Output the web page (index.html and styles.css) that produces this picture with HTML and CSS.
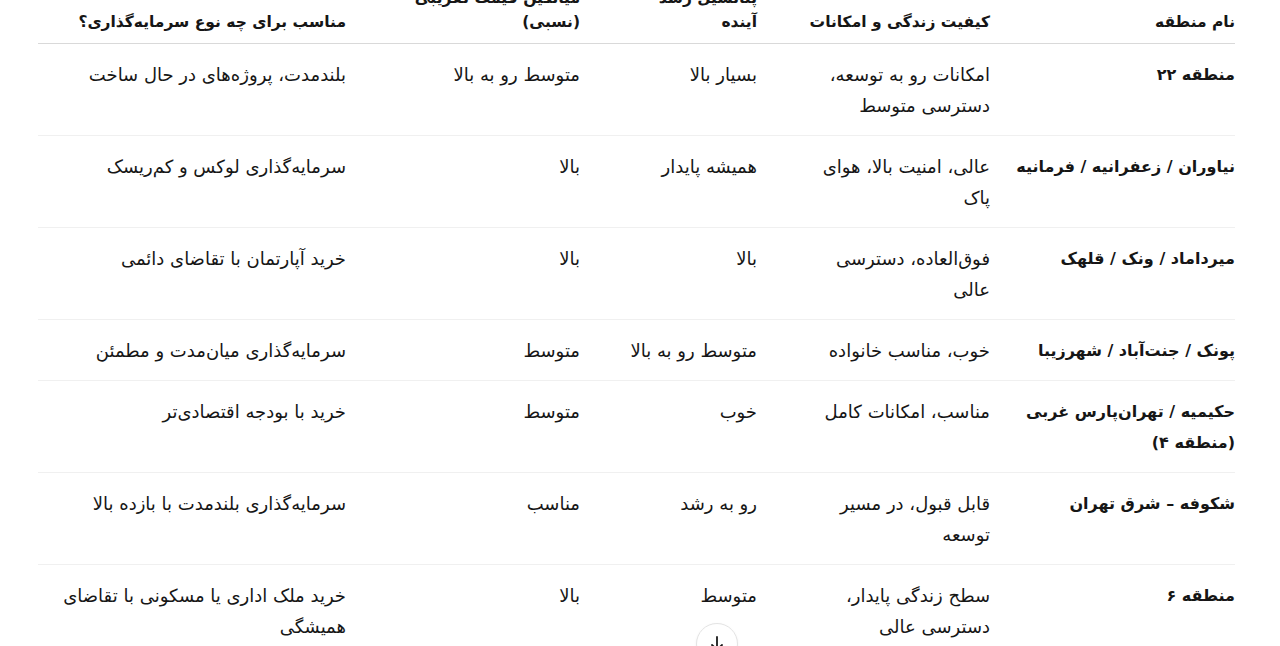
FILE: index.html
```html
<!DOCTYPE html>
<html lang="fa" dir="rtl">
<head>
<meta charset="utf-8">
<title>مقایسه مناطق</title>
<link rel="stylesheet" href="styles.css">
</head>
<body>
<main class="page">
  <table class="compare">
    <colgroup>
      <col class="c1"><col class="c2"><col class="c3"><col class="c4"><col class="c5">
    </colgroup>
    <thead>
      <tr>
        <th>نام منطقه</th>
        <th>کیفیت زندگی و امکانات</th>
        <th>پتانسیل رشد آینده</th>
        <th>میانگین قیمت تقریبی (نسبی)</th>
        <th>مناسب برای چه نوع سرمایه‌گذاری؟</th>
      </tr>
    </thead>
    <tbody>
      <tr>
        <td>منطقه ۲۲</td>
        <td>امکانات رو به توسعه، دسترسی متوسط</td>
        <td>بسیار بالا</td>
        <td>متوسط رو به بالا</td>
        <td>بلندمدت، پروژه‌های در حال ساخت</td>
      </tr>
      <tr>
        <td>نیاوران / زعفرانیه / فرمانیه</td>
        <td>عالی، امنیت بالا، هوای پاک</td>
        <td>همیشه پایدار</td>
        <td>بالا</td>
        <td>سرمایه‌گذاری لوکس و کم‌ریسک</td>
      </tr>
      <tr>
        <td>میرداماد / ونک / قلهک</td>
        <td>فوق‌العاده، دسترسی عالی</td>
        <td>بالا</td>
        <td>بالا</td>
        <td>خرید آپارتمان با تقاضای دائمی</td>
      </tr>
      <tr>
        <td>پونک / جنت‌آباد / شهرزیبا</td>
        <td>خوب، مناسب خانواده</td>
        <td>متوسط رو به بالا</td>
        <td>متوسط</td>
        <td>سرمایه‌گذاری میان‌مدت و مطمئن</td>
      </tr>
      <tr>
        <td>حکیمیه / تهران‌پارس غربی (منطقه ۴)</td>
        <td>مناسب، امکانات کامل</td>
        <td>خوب</td>
        <td>متوسط</td>
        <td>خرید با بودجه اقتصادی‌تر</td>
      </tr>
      <tr>
        <td>شکوفه – شرق تهران</td>
        <td>قابل قبول، در مسیر توسعه</td>
        <td>رو به رشد</td>
        <td>مناسب</td>
        <td>سرمایه‌گذاری بلندمدت با بازده بالا</td>
      </tr>
      <tr>
        <td>منطقه ۶</td>
        <td>سطح زندگی پایدار، دسترسی عالی</td>
        <td>متوسط</td>
        <td>بالا</td>
        <td>خرید ملک اداری یا مسکونی با تقاضای همیشگی</td>
      </tr>
    </tbody>
  </table>
</main>
<button class="scroll-down" type="button" aria-label="پایین">
  <svg width="20" height="20" viewBox="0 0 20 20" fill="none" stroke="#1a1a1a" stroke-width="1.8" stroke-linecap="round" stroke-linejoin="round"><path d="M10 3v13M5 11l5 5 5-5"/></svg>
</button>
</body>
</html>
```

FILE: styles.css
```css
html, body {
  margin: 0;
  padding: 0;
  background: #ffffff;
}
body {
  font-family: "DejaVu Sans", "Noto Sans", sans-serif;
  color: #161616;
  font-size: 18px;
  overflow: hidden;
  height: 646px;
}
.page {
  padding: 0 45px 0 38px;
  margin-top: -14px;
}
.compare {
  width: 1197px;
  border-collapse: collapse;
  table-layout: fixed;
}
.c1 { width: 245px; }
.c2 { width: 233px; }
.c3 { width: 177px; }
.c4 { width: 234px; }
.c5 { width: 308px; }

.compare th {
  font-size: 15.5px;
  font-weight: bold;
  text-align: right;
  vertical-align: bottom;
  line-height: 24px;
  padding: 0 0 9px 0;
  border-bottom: 1px solid #d9d9d9;
}
.compare td {
  text-align: right;
  vertical-align: top;
  line-height: 31px;
  padding: 15px 0 14px 0;
}
.compare tbody tr {
  border-bottom: 1px solid #f0f0f0;
}
.compare th:nth-child(1), .compare td:nth-child(1) { padding-left: 10px; }
.compare th:nth-child(2), .compare td:nth-child(2) { padding-left: 47px; }
.compare th:nth-child(3), .compare td:nth-child(3) { padding-left: 47px; }
.compare th:nth-child(4), .compare td:nth-child(4) { padding-left: 44px; }
.compare th:nth-child(5), .compare td:nth-child(5) { padding-left: 0; }

.compare td:first-child {
  font-size: 16px;
  font-weight: bold;
}
.scroll-down {
  position: fixed;
  left: 696px;
  top: 623px;
  width: 42px;
  height: 42px;
  border-radius: 50%;
  border: 1px solid #e3e3e3;
  background: #ffffff;
  display: flex;
  align-items: center;
  justify-content: center;
  padding: 0;
  box-shadow: 0 1px 3px rgba(0,0,0,0.06);
}
```
